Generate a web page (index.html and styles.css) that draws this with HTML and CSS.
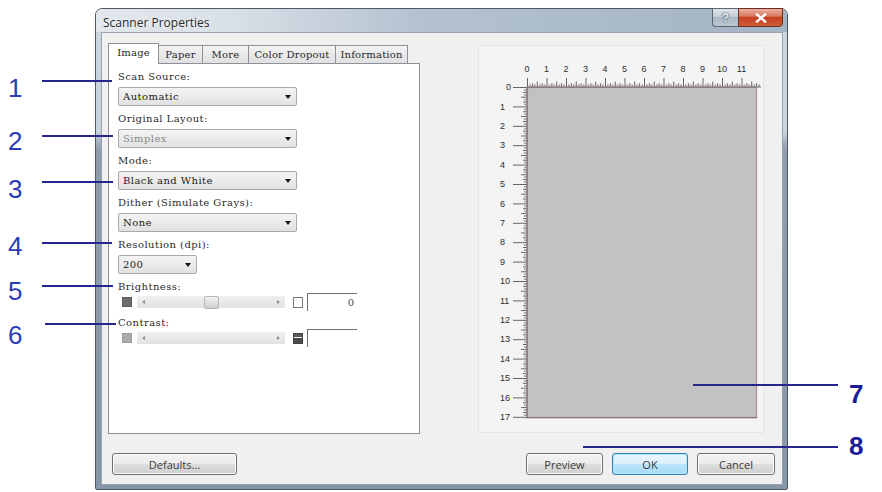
FILE: index.html
```html
<!DOCTYPE html>
<html>
<head>
<meta charset="utf-8">
<title>Scanner Properties</title>
<link rel="stylesheet" href="styles.css">
</head>
<body>
<div class="stage">
  <div class="window">
    <div class="titlebar">
      <span class="title">Scanner Properties</span>
      <div class="caption">
        <div class="cap-btn cap-help">?</div>
        <div class="cap-btn cap-close">
          <svg width="12" height="10" viewBox="0 0 12 10"><path d="M2 1.5 L10 8.5 M10 1.5 L2 8.5" stroke="#fff" stroke-width="2.4" stroke-linecap="square"/></svg>
        </div>
      </div>
    </div>
    <div class="client">
      <div class="main">
        <div class="tabs">
          <div class="tabstrip">
            <div class="tab tab-active tab-image">Image</div>
            <div class="tab tab-paper">Paper</div>
            <div class="tab tab-more">More</div>
            <div class="tab tab-color">Color Dropout</div>
            <div class="tab tab-info">Information</div>
          </div>
          <div class="tabpanel">
            <div class="field">
              <div class="label">Scan Source:</div>
              <div class="combo"><span>Automatic</span><i class="arrow"></i></div>
            </div>
            <div class="field">
              <div class="label">Original Layout:</div>
              <div class="combo combo-dim"><span>Simplex</span><i class="arrow"></i></div>
            </div>
            <div class="field">
              <div class="label">Mode:</div>
              <div class="combo"><span>Black and White</span><i class="arrow"></i></div>
            </div>
            <div class="field">
              <div class="label">Dither (Simulate Grays):</div>
              <div class="combo"><span>None</span><i class="arrow"></i></div>
            </div>
            <div class="field">
              <div class="label">Resolution (dpi):</div>
              <div class="combo combo-small"><span>200</span><i class="arrow"></i></div>
            </div>
            <div class="field field-slider">
              <div class="label">Brightness:</div>
              <div class="slider-row">
                <span class="swatch swatch-dark"></span>
                <div class="track"><span class="tri tri-left"></span><span class="thumb"></span><span class="tri tri-right"></span></div>
                <span class="swatch swatch-white"></span>
                <div class="valuebox">0</div>
              </div>
            </div>
            <div class="field field-slider">
              <div class="label">Contrast:</div>
              <div class="slider-row">
                <span class="swatch swatch-light"></span>
                <div class="track"><span class="tri tri-left"></span><span class="tri tri-right"></span></div>
                <span class="swatch swatch-contrast"></span>
                <div class="valuebox"></div>
              </div>
            </div>
          </div>
        </div>
        <div class="preview">
          <svg class="ruler" width="284" height="386" viewBox="479 46 284 386">
            <defs>
              <pattern id="tickTop" patternUnits="userSpaceOnUse" x="527" y="77" width="19.5" height="10">
                <g stroke="#555555" stroke-width="0.9">
                  <line x1="0.5" y1="1" x2="0.5" y2="10"/>
                  <line x1="2.9" y1="7.3" x2="2.9" y2="10"/>
                  <line x1="5.4" y1="6.2" x2="5.4" y2="10"/>
                  <line x1="7.8" y1="7.3" x2="7.8" y2="10"/>
                  <line x1="10.25" y1="4.5" x2="10.25" y2="10"/>
                  <line x1="12.7" y1="7.3" x2="12.7" y2="10"/>
                  <line x1="15.1" y1="6.2" x2="15.1" y2="10"/>
                  <line x1="17.6" y1="7.3" x2="17.6" y2="10"/>
                </g>
              </pattern>
              <pattern id="tickLeft" patternUnits="userSpaceOnUse" x="513" y="87" width="14" height="19.4">
                <g stroke="#555555" stroke-width="0.9">
                  <line x1="0" y1="0.5" x2="14" y2="0.5"/>
                  <line x1="11" y1="2.9" x2="14" y2="2.9"/>
                  <line x1="10" y1="5.35" x2="14" y2="5.35"/>
                  <line x1="11" y1="7.8" x2="14" y2="7.8"/>
                  <line x1="8" y1="10.2" x2="14" y2="10.2"/>
                  <line x1="11" y1="12.6" x2="14" y2="12.6"/>
                  <line x1="10" y1="15.05" x2="14" y2="15.05"/>
                  <line x1="11" y1="17.5" x2="14" y2="17.5"/>
                </g>
              </pattern>
            </defs>
            <rect x="527" y="77" width="234" height="10" fill="url(#tickTop)"/>
            <rect x="513" y="87" width="14" height="332" fill="url(#tickLeft)"/>
            <rect x="527.5" y="87.5" width="229" height="330" fill="#c2c2c2" stroke="#b38c8c" stroke-width="1.2"/>
            <line x1="527" y1="87" x2="761" y2="87" stroke="#6e6e6e" stroke-width="1.2"/>
            <line x1="527" y1="87" x2="527" y2="418" stroke="#7a6a6a" stroke-width="1"/>
            <line x1="527" y1="417.6" x2="757" y2="417.6" stroke="#8a7070" stroke-width="1.2"/>
            <g class="rnum" text-anchor="middle">
              <text x="527" y="71.5">0</text>
              <text x="546.5" y="71.5">1</text>
              <text x="566" y="71.5">2</text>
              <text x="585.5" y="71.5">3</text>
              <text x="605" y="71.5">4</text>
              <text x="624.5" y="71.5">5</text>
              <text x="644" y="71.5">6</text>
              <text x="663.5" y="71.5">7</text>
              <text x="683" y="71.5">8</text>
              <text x="702.5" y="71.5">9</text>
              <text x="722" y="71.5">10</text>
              <text x="741.5" y="71.5">11</text>
            </g>
            <g class="rnum" text-anchor="start">
              <text x="506" y="90.2">0</text>
              <text x="500" y="109.6">1</text>
              <text x="500" y="129">2</text>
              <text x="500" y="148.4">3</text>
              <text x="500" y="167.8">4</text>
              <text x="500" y="187.2">5</text>
              <text x="500" y="206.6">6</text>
              <text x="500" y="226">7</text>
              <text x="500" y="245.4">8</text>
              <text x="500" y="264.8">9</text>
              <text x="500" y="284.2">10</text>
              <text x="500" y="303.6">11</text>
              <text x="500" y="323">12</text>
              <text x="500" y="342.4">13</text>
              <text x="500" y="361.8">14</text>
              <text x="500" y="381.2">15</text>
              <text x="500" y="400.6">16</text>
              <text x="500" y="420">17</text>
            </g>
          </svg>
        </div>
      </div>
      <div class="buttons">
        <button class="btn btn-defaults">Defaults...</button>
        <button class="btn btn-preview">Preview</button>
        <button class="btn btn-ok">OK</button>
        <button class="btn btn-cancel">Cancel</button>
      </div>
    </div>
  </div>

  <div class="callout-line l1"></div>
  <div class="callout-line l2"></div>
  <div class="callout-line l3"></div>
  <div class="callout-line l4"></div>
  <div class="callout-line l5"></div>
  <div class="callout-line l6"></div>
  <div class="callout-line l7"></div>
  <div class="callout-line l8"></div>
  <div class="callout-num n1">1</div>
  <div class="callout-num n2">2</div>
  <div class="callout-num n3">3</div>
  <div class="callout-num n4">4</div>
  <div class="callout-num n5">5</div>
  <div class="callout-num n6">6</div>
  <div class="callout-num callout-bold n7">7</div>
  <div class="callout-num callout-bold n8">8</div>
</div>
</body>
</html>
```

FILE: styles.css
```css
* { box-sizing: border-box; }
html, body { margin: 0; padding: 0; background: #ffffff; }

.stage {
  position: relative;
  width: 882px;
  height: 492px;
  overflow: hidden;
  padding: 8px 0 0 95px;
  background: #ffffff;
}

/* ---------- window frame ---------- */
.window {
  width: 693px;
  height: 482px;
  border: 1px solid #4f5966;
  border-radius: 7px 7px 2px 2px;
  display: flex;
  flex-direction: column;
  padding: 0 4px 4px 5px;
  background: linear-gradient(to bottom, #cdd5de 0, #cbd4dd 122px, #8e9cac 140px, #8796a7 100%);
}

.titlebar {
  height: 23px;
  margin: 0 -4px 0 -5px;
  padding-left: 7px;
  display: flex;
  align-items: flex-start;
  border-radius: 6px 6px 0 0;
  background: linear-gradient(to right, #e2e7ec 0, #d8dfe6 140px, #b4c2d0 320px, #a3b4c6 100%);
}

.title {
  padding-top: 6px;
  line-height: 16px;
  font-family: "Open Sans", "Liberation Sans", sans-serif;
  font-size: 12px;
  color: #2a2a2a;
  text-shadow: 0 0 5px #ffffff;
}

.caption {
  margin-left: auto;
  margin-right: 4px;
  margin-top: -1px;
  display: flex;
}

.cap-btn {
  height: 19px;
  display: flex;
  align-items: center;
  justify-content: center;
  border: 1px solid #5b6570;
}

.cap-help {
  width: 26px;
  border-right: none;
  border-radius: 0 0 0 4px;
  background: linear-gradient(to bottom, #dfe4e9 0, #c3ccd6 45%, #a9b6c4 50%, #bcc8d4 100%);
  font-family: "Liberation Sans", sans-serif;
  font-weight: bold;
  font-size: 12px;
  color: #eef1f4;
  text-shadow: 0 0 2px #37475a, 0 0 1px #37475a;
}

.cap-close {
  width: 45px;
  border-color: #6e2d20;
  border-radius: 0 0 4px 0;
  background: linear-gradient(to bottom, #eab0a0 0, #d87a62 42%, #c4421f 50%, #cf5a37 100%);
}

/* ---------- client area ---------- */
.client {
  flex: 1;
  background: #f0f0f0;
  border: 1px solid #98a4b1;
  padding: 10px 7px 9px 6px;
  display: flex;
  flex-direction: column;
}

.main {
  display: flex;
  align-items: flex-start;
  height: 391px;
}

.tabs { width: 312px; }

.tabstrip {
  display: flex;
  align-items: flex-end;
  height: 21px;
  margin-bottom: -1px;
  position: relative;
  z-index: 1;
}

.tab {
  height: 18px;
  margin-left: -1px;
  margin-bottom: 1px;
  border: 1px solid #8e9199;
  border-bottom: none;
  background: linear-gradient(to bottom, #f4f4f4 0, #e9e9e9 50%, #e0e0e0 100%);
  font-family: "DejaVu Serif", "Liberation Serif", serif;
  font-size: 10px;
  letter-spacing: 0.2px;
  line-height: 17px;
  color: #2a2a2a;
  text-align: center;
  white-space: nowrap;
}

.tab-active {
  height: 21px;
  margin-left: 0;
  margin-bottom: 0;
  background: #ffffff;
  position: relative;
  z-index: 2;
  line-height: 17px;
}

.tab-image { width: 51px; }
.tab-paper { width: 45px; }
.tab-more { width: 47px; }
.tab-color { width: 88px; }
.tab-info { width: 73px; }

.tabpanel {
  height: 371px;
  border: 1px solid #8e9199;
  background: #ffffff;
  padding: 7px 9px 0 9px;
}

.field { margin-bottom: 7px; }
.field-slider { margin-bottom: 6px; }

.label {
  height: 12px;
  line-height: 12px;
  font-family: "DejaVu Serif", "Liberation Serif", serif;
  font-size: 10px;
  letter-spacing: 0.45px;
  color: #2b2b2b;
  white-space: nowrap;
}

.combo {
  margin-top: 4px;
  width: 179px;
  height: 19px;
  border: 1px solid #a9a9a9;
  border-radius: 2px;
  background: linear-gradient(to bottom, #f4f4f4 0, #ebebeb 50%, #e1e1e1 100%);
  display: flex;
  align-items: center;
  justify-content: space-between;
  padding: 0 5px 0 4px;
  font-family: "DejaVu Serif", "Liberation Serif", serif;
  font-size: 10px;
  letter-spacing: 0.45px;
  color: #222222;
}

.combo-dim { color: #8a8a8a; }
.combo-small { width: 79px; }

.arrow {
  width: 0;
  height: 0;
  border-left: 3.5px solid transparent;
  border-right: 3.5px solid transparent;
  border-top: 4px solid #151515;
}

.slider-row {
  height: 18px;
  display: flex;
  align-items: center;
}

.swatch {
  width: 10px;
  height: 10px;
  flex: none;
}

.swatch-dark { margin-left: 4px; background: #6d6d6d; border: 1px solid #5a5a5a; }
.swatch-light { margin-left: 4px; background: #ababab; border: 1px solid #9c9c9c; }
.swatch-white { margin-left: 8px; height: 11px; background: #ffffff; border: 1px solid #777777; }
.swatch-contrast {
  margin-left: 8px;
  height: 11px;
  border: 1px solid #444444;
  background: linear-gradient(to bottom, #5a5a5a 0, #5a5a5a 3px, #f2f2f2 3px, #f2f2f2 4px, #4a4a4a 4px);
}

.track {
  position: relative;
  margin-left: 5px;
  width: 148px;
  height: 12px;
  border-radius: 1px;
  background: linear-gradient(to bottom, #f0f0f0 0, #e2e2e2 100%);
  display: flex;
  align-items: center;
  justify-content: space-between;
  padding: 0 5px;
}

.tri { width: 0; height: 0; border-top: 2.5px solid transparent; border-bottom: 2.5px solid transparent; }
.tri-left { border-right: 3px solid #8a8a8a; }
.tri-right { border-left: 3px solid #8a8a8a; }

.thumb {
  position: absolute;
  left: 67px;
  top: 0;
  width: 15px;
  height: 13px;
  border: 1px solid #b5b5b5;
  border-radius: 2px;
  background: linear-gradient(to bottom, #f2f2f2 0, #dedede 55%, #cdcdcd 100%);
}

.valuebox {
  margin-left: 4px;
  width: 50px;
  height: 18px;
  border-left: 1px solid #6e6e6e;
  border-top: 1px solid #6e6e6e;
  background: #ffffff;
  text-align: right;
  padding-right: 3px;
  font-family: "DejaVu Serif", "Liberation Serif", serif;
  font-size: 10px;
  line-height: 18px;
  color: #4a4a4a;
}

/* ---------- preview ---------- */
.preview {
  margin-left: 58px;
  margin-top: 2px;
  width: 286px;
  height: 388px;
  border: 1px solid #e4e4e4;
  background: #f4f4f4;
}

.ruler { display: block; }
.rnum text {
  font-family: "Liberation Sans", sans-serif;
  font-size: 9px;
  fill: #2e2e2e;
}

/* ---------- buttons ---------- */
.buttons {
  display: flex;
  margin-top: 19px;
  height: 22px;
}

.btn {
  height: 22px;
  padding: 0;
  margin: 0;
  border: 1px solid #707070;
  border-radius: 3px;
  background: linear-gradient(to bottom, #f3f3f3 0, #ebebeb 49%, #dddddd 50%, #cfcfcf 100%);
  box-shadow: inset 0 0 0 1px #fbfbfb;
  font-family: "Open Sans", "Liberation Sans", sans-serif;
  font-size: 11px;
  color: #3a3a3a;
}

.btn-defaults { margin-left: 4px; width: 125px; }
.btn-preview { margin-left: auto; width: 77px; }
.btn-ok {
  margin-left: 9px;
  width: 76px;
  border-color: #3c7fb1;
  background: linear-gradient(to bottom, #eaf6fd 0, #d9f0fc 49%, #bee6fd 50%, #a7d9f5 100%);
  box-shadow: inset 0 0 0 1px #aee5f8;
}
.btn-cancel { margin-left: 9px; width: 78px; }

/* ---------- callouts ---------- */
.callout-line {
  position: absolute;
  height: 2px;
  background: #26268e;
}
.l1 { left: 42px; top: 80px; width: 70px; }
.l2 { left: 42px; top: 135px; width: 71px; }
.l3 { left: 42px; top: 181px; width: 71px; }
.l4 { left: 42px; top: 242px; width: 70px; }
.l5 { left: 42px; top: 285px; width: 71px; }
.l6 { left: 45px; top: 323px; width: 71px; }
.l7 { left: 693px; top: 384px; width: 145px; }
.l8 { left: 583px; top: 446px; width: 255px; }

.callout-num {
  position: absolute;
  font-family: "Liberation Sans", Arial, sans-serif;
  font-size: 26px;
  line-height: 26px;
  color: #2b3db6;
}
.callout-bold { font-weight: bold; color: #1c1c9a; }
.n1 { left: 8px; top: 75px; }
.n2 { left: 8px; top: 128px; }
.n3 { left: 8px; top: 176px; }
.n4 { left: 8px; top: 233px; }
.n5 { left: 8px; top: 278px; }
.n6 { left: 8px; top: 322px; }
.n7 { left: 849px; top: 381px; }
.n8 { left: 849px; top: 433px; }
```
